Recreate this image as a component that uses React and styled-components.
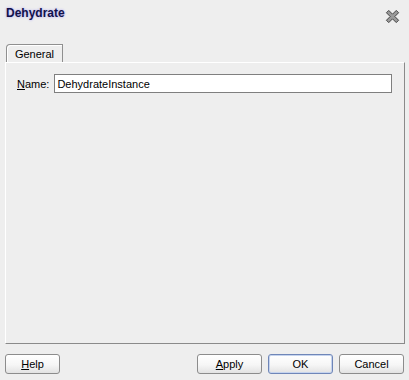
import React from 'react';
import styled, { createGlobalStyle, css } from 'styled-components';

const GlobalStyle = createGlobalStyle`
  html, body {
    margin: 0;
    padding: 0;
    background: #eeeeee;
  }
`;

const Dialog = styled.div`
  width: 409px;
  height: 380px;
  background: #eeeeee;
  font-family: Tahoma, "Liberation Sans", Arial, sans-serif;
  font-size: 11px;
  color: #000;
  display: flex;
  flex-direction: column;
  box-sizing: border-box;
`;

const TitleBar = styled.div`
  height: 24px;
  display: flex;
  align-items: flex-start;
  justify-content: space-between;
  padding: 0 9px 0 6px;
`;

const Title = styled.div`
  font-family: Tahoma, "Liberation Sans", Arial, sans-serif;
  font-weight: bold;
  font-size: 12px;
  line-height: 14px;
  padding-top: 6px;
  color: #12124a;
  text-shadow: 0 0 2px #b9b3ee, 0 0 3px #c9c4f4;
`;

const CloseButton = styled.button`
  border: 0;
  background: transparent;
  padding: 0;
  margin-top: 9px;
  width: 15px;
  height: 15px;
  display: flex;
  cursor: pointer;
`;

const TabStrip = styled.div`
  display: flex;
  padding: 20px 0 0 6px;
  height: 18px;
`;

const Tab = styled.div`
  width: 57px;
  height: 18px;
  box-sizing: border-box;
  border: 1px solid #8f8f8f;
  border-bottom: 0;
  border-radius: 4px 0 0 0;
  background: #eeeeee;
  display: flex;
  align-items: center;
  justify-content: center;
  padding-top: 1px;
  ${({ active }) =>
    active &&
    css`
      box-shadow: inset 1px 1px 0 #ffffff;
    `}
`;

const Panel = styled.div`
  margin: 0 4px 0 5px;
  height: 282px;
  box-sizing: border-box;
  border-top: 1px solid #ffffff;
  border-left: 1px solid #ffffff;
  border-right: 1px solid #8a8a8a;
  border-bottom: 1px solid #8a8a8a;
  padding: 11px 12px 0 11px;
`;

const FieldRow = styled.div`
  display: flex;
  align-items: center;
  gap: 5px;
`;

const Label = styled.label`
  white-space: nowrap;
  u {
    text-decoration: underline;
  }
`;

const TextInput = styled.input`
  flex: 1;
  height: 19px;
  box-sizing: border-box;
  border: 1px solid #7f7f7f;
  background: #ffffff;
  font-family: Tahoma, "Liberation Sans", Arial, sans-serif;
  font-size: 11px;
  padding: 0 2px;
  margin: 0;
  outline: none;
`;

const Footer = styled.div`
  display: flex;
  align-items: center;
  padding: 10px 5px 0 5px;
`;

const Spacer = styled.div`
  flex: 1;
`;

const Button = styled.button`
  width: ${({ w }) => w || 65}px;
  height: 20px;
  box-sizing: border-box;
  margin-left: ${({ gap }) => gap || 0}px;
  border: 1px solid ${({ primary }) => (primary ? '#6f86b8' : '#8c8c8c')};
  border-radius: 3px;
  background: linear-gradient(#ffffff 0%, #f6f6f6 55%, #e2e2e2 100%);
  font-family: Tahoma, "Liberation Sans", Arial, sans-serif;
  font-size: 11px;
  color: #000;
  padding: 0;
  cursor: pointer;
  ${({ primary }) =>
    primary &&
    css`
      box-shadow: inset 0 0 0 1px #c6d4ee;
    `}
`;

const CloseIcon = () => (
  <svg width="15" height="15" viewBox="0 0 16 16">
    <path
      d="M1.5 4 L4 1.5 L8 5.5 L12 1.5 L14.5 4 L10.5 8 L14.5 12 L12 14.5 L8 10.5 L4 14.5 L1.5 12 L5.5 8 Z"
      fill="#9a9a9a"
      stroke="#3c3c3c"
      strokeWidth="1"
      strokeLinejoin="round"
    />
  </svg>
);

const App = () => (
  <>
    <GlobalStyle />
    <Dialog>
      <TitleBar>
        <Title>Dehydrate</Title>
        <CloseButton aria-label="Close">
          <CloseIcon />
        </CloseButton>
      </TitleBar>
      <TabStrip>
        <Tab active>General</Tab>
      </TabStrip>
      <Panel>
        <FieldRow>
          <Label>
            <u>N</u>ame:
          </Label>
          <TextInput defaultValue="DehydrateInstance" />
        </FieldRow>
      </Panel>
      <Footer>
        <Button w={55}>
          <u>H</u>elp
        </Button>
        <Spacer />
        <Button>
          <u>A</u>pply
        </Button>
        <Button primary gap={6}>
          OK
        </Button>
        <Button gap={6}>Cancel</Button>
      </Footer>
    </Dialog>
  </>
);

export default App;
